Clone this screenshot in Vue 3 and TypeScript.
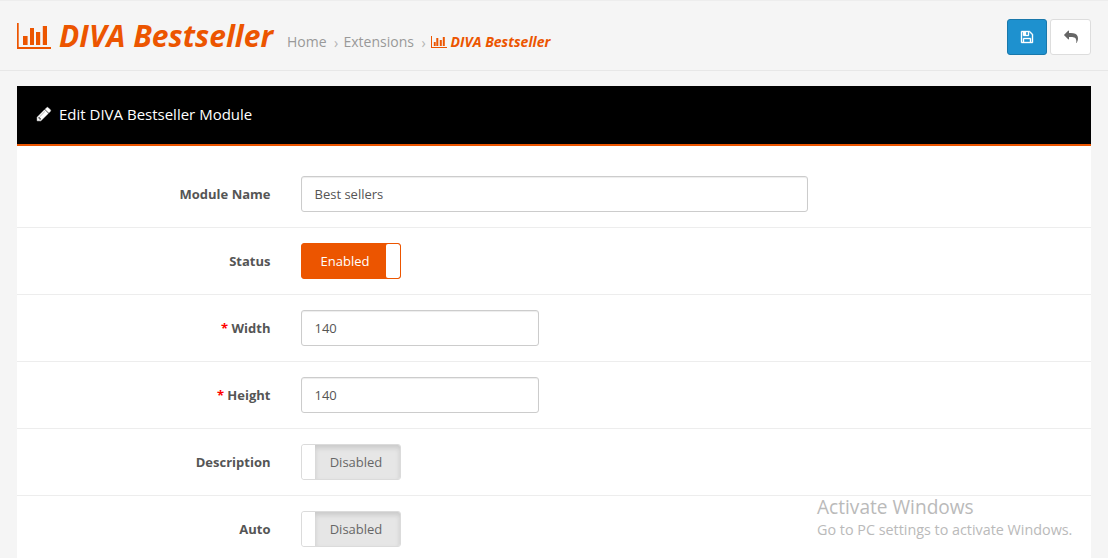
<script setup lang="ts">
interface Field {
  label: string
  kind: 'text' | 'toggle'
  value?: string
  on?: boolean
  required?: boolean
  wide?: boolean
}

const fields: Field[] = [
  { label: 'Module Name', kind: 'text', value: 'Best sellers', wide: true },
  { label: 'Status', kind: 'toggle', on: true },
  { label: 'Width', kind: 'text', value: '140', required: true },
  { label: 'Height', kind: 'text', value: '140', required: true },
  { label: 'Description', kind: 'toggle', on: false },
  { label: 'Auto', kind: 'toggle', on: false },
]
</script>

<template>
  <div class="page">
    <header class="header">
      <h1 class="title">
        <svg class="chart-large" viewBox="0 0 34 26">
          <path d="M0 0h1.7v24h32.3v2h-34zM6 13h4.6v9h-4.6zM13 5h4v17h-4zM19 9h4.2v13h-4.2zM25.8 3h4.2v19h-4.2z" />
        </svg>
        <span class="title-text">DIVA Bestseller</span>
      </h1>
      <nav class="crumbs">
        <a class="home">Home</a>
        <span class="sep">›</span>
        <a class="ext">Extensions</a>
        <span class="sep">›</span>
        <a class="current">
          <svg class="chart-small" viewBox="0 0 16 12">
            <path d="M0 0h1v11h15v1h-16zM2.8 6h1.9v4h-1.9zM5.3 2h2v8h-2zM8.8 4h2v6h-2zM11.8 1h2v9h-2z" />
          </svg>
          <span>DIVA Bestseller</span>
        </a>
      </nav>
      <div class="actions">
        <button class="btn primary" aria-label="Save">
          <svg viewBox="0 0 1792 1792"><path d="M512 1536h768v-384h-768v384zm896 0h128v-896q0-14-10-38.5t-20-34.5l-281-281q-10-10-34-20t-39-10v416q0 40-28 68t-68 28h-576q-40 0-68-28t-28-68v-416h-128v1280h128v-416q0-40 28-68t68-28h832q40 0 68 28t28 68v416zm-384-928v-320q0-13-9.5-22.5t-22.5-9.5h-192q-13 0-22.5 9.5t-9.5 22.5v320q0 13 9.5 22.5t22.5 9.5h192q13 0 22.5-9.5t9.5-22.5zm640 32v928q0 40-28 68t-68 28h-1344q-40 0-68-28t-28-68v-1344q0-40 28-68t68-28h928q40 0 88 20t76 48l280 280q28 28 48 76t20 88z" /></svg>
        </button>
        <button class="btn" aria-label="Back">
          <svg viewBox="0 0 1792 1792"><path d="M1792 1120q0 166-127 451-3 7-10.5 24t-13.5 30-13 22q-12 17-28 17-15 0-23.5-10t-8.5-25q0-9 2.5-26.5t2.5-23.5q5-68 5-123 0-101-17.5-181t-48.5-138.5-80-101-105.5-69.5-133-42.5-154-21.5-175.5-6h-224v256q0 26-19 45t-45 19-45-19l-512-512q-19-19-19-45t19-45l512-512q19-19 45-19t45 19 19 45v256h224q713 0 875 403 53 134 53 333z" /></svg>
        </button>
      </div>
    </header>

    <main class="panel">
      <div class="panel-head">
        <svg class="pencil" viewBox="0 0 1792 1792"><path d="M491 1536l91-91-235-235-91 91v107h128v128h107zm523-928q0-22-22-22-10 0-17 7l-542 542q-7 7-7 17 0 22 22 22 10 0 17-7l542-542q7-7 7-17zm-54-192l416 416-832 832h-416v-416zm683 96q0 53-37 90l-166 166-416-416 166-165q36-38 90-38 53 0 91 38l235 234q37 39 37 91z" /></svg>
        <span>Edit DIVA Bestseller Module</span>
      </div>
      <form class="form">
        <div v-for="f in fields" :key="f.label" class="row">
          <label class="label"><span v-if="f.required" class="star">* </span>{{ f.label }}</label>
          <input v-if="f.kind === 'text'" class="input" :class="{ wide: f.wide }" type="text" :value="f.value" />
          <div v-else class="toggle" :class="{ on: f.on }">
            <span class="handle"></span>
            <span class="state">{{ f.on ? 'Enabled' : 'Disabled' }}</span>
          </div>
        </div>
      </form>
    </main>

    <aside class="watermark">
      <div class="wm-title">Activate Windows</div>
      <div class="wm-text">Go to PC settings to activate Windows.</div>
    </aside>
  </div>
</template>

<style>
body {
  overflow: hidden;
}
</style>

<style scoped>
.page {
  position: relative;
  box-sizing: border-box;
  width: 1108px;
  height: 558px;
  overflow: hidden;
  background: #f5f5f5;
  border-top: 1px solid #ededed;
  font-family: 'Open Sans', 'Liberation Sans', sans-serif;
  font-size: 13px;
  color: #555;
}
.header {
  box-sizing: border-box;
  display: flex;
  align-items: flex-start;
  height: 70px;
  padding: 0 17px;
  border-bottom: 1px solid #e7e7e7;
}
svg {
  display: block;
  fill: currentColor;
  flex: none;
}
.title {
  display: flex;
  margin: 0;
  width: 270px;
  color: #ec5500;
  font-size: 30px;
  font-weight: 700;
  font-style: italic;
  line-height: 40px;
  padding-top: 15px;
  white-space: nowrap;
}
.chart-large {
  width: 34px;
  height: 26px;
  margin: 7px 8px 0 0;
}
.crumbs {
  display: flex;
  padding-top: 31px;
  line-height: 20px;
  font-size: 14px;
  color: #999;
  white-space: nowrap;
}
.home {
  width: 47px;
}
.ext {
  width: 78px;
}
.sep {
  width: 9.5px;
  font-size: 14px;
  line-height: 21px;
  color: #b3b3b3;
}
.current {
  display: flex;
  color: #ec5500;
  font-weight: 700;
  font-style: italic;
}
.chart-small {
  width: 16px;
  height: 12px;
  margin: 4px 3.5px 0 0;
}
.actions {
  display: flex;
  gap: 3px;
  margin: 18px 0 0 auto;
}
.btn {
  box-sizing: border-box;
  display: flex;
  align-items: center;
  justify-content: center;
  width: 41px;
  height: 36px;
  padding: 0;
  border: 1px solid #ddd;
  border-radius: 3px;
  background: #fff;
  color: #666;
}
.btn svg {
  width: 14px;
  height: 14px;
}
.btn.primary {
  width: 40px;
  border-color: #1978ab;
  background: #1e91cf;
  color: #fff;
}
.btn.primary svg {
  stroke: currentColor;
  stroke-width: 50;
}
.panel {
  margin: 15px 17px 0;
  background: #fff;
}
.panel-head {
  box-sizing: border-box;
  display: flex;
  align-items: center;
  height: 60px;
  padding: 0 20px 2px 19px;
  background: #000;
  border-bottom: 2px solid #ec5500;
  color: #fff;
  font-size: 15px;
}
.pencil {
  width: 16px;
  height: 16px;
  margin-right: 7px;
  stroke: currentColor;
  stroke-width: 50;
}
.form {
  padding-top: 15px;
}
.row {
  box-sizing: border-box;
  display: flex;
  align-items: center;
  height: 67px;
  border-bottom: 1px solid #ededed;
}
.label {
  width: 253.5px;
  margin-right: 30.5px;
  text-align: right;
  font-weight: 700;
}
.star {
  color: #f00;
}
.input {
  box-sizing: border-box;
  width: 238px;
  height: 36px;
  padding: 0 12.5px;
  border: 1px solid #ccc;
  border-radius: 3px;
  background: #fff;
  box-shadow: inset 0 1px 1px rgba(0, 0, 0, 0.075);
  color: #555;
  font: inherit;
}
.input.wide {
  width: 507px;
}
.toggle {
  box-sizing: border-box;
  display: flex;
  width: 100px;
  height: 36px;
  border: 1px solid #dbdbdb;
  border-radius: 3px;
  overflow: hidden;
  color: #666;
}
.handle {
  width: 13px;
  background: #fff;
  border-radius: 2px;
}
.state {
  flex: 1;
  background: #e6e6e6;
  box-shadow: inset 0 3px 5px rgba(0, 0, 0, 0.125);
  line-height: 34px;
  text-align: center;
  padding-right: 3px;
}
.toggle.on {
  flex-direction: row-reverse;
  border-color: #ec5500;
  background: #ec5500;
  color: #fff;
}
.toggle.on .handle {
  width: 14px;
}
.toggle.on .state {
  background: #ec5500;
  box-shadow: none;
  padding: 0 0 0 2px;
}
.watermark {
  position: absolute;
  left: 817px;
  top: 494px;
  color: #bababa;
  white-space: nowrap;
}
.wm-title {
  font-size: 19.1px;
  line-height: 24px;
}
.wm-text {
  font-size: 14.35px;
  line-height: 22px;
}
</style>
